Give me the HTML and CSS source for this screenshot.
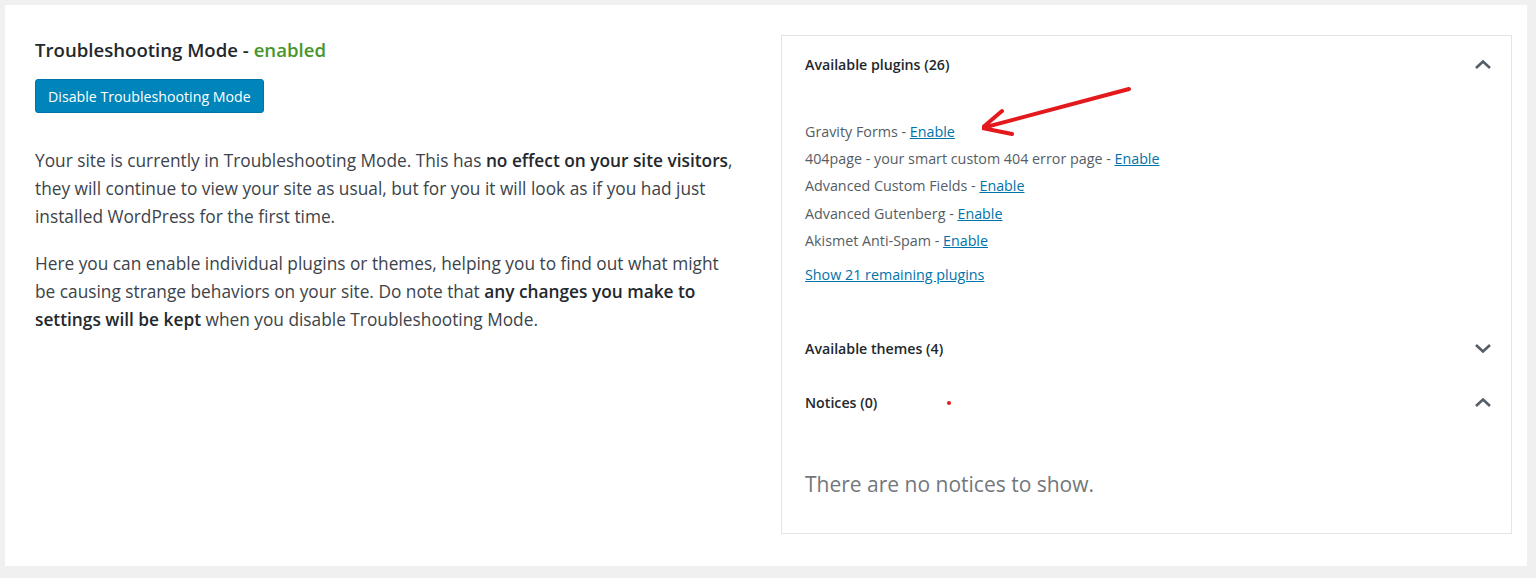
FILE: index.html
```html
<!DOCTYPE html>
<html lang="en">
<head>
    <meta charset="UTF-8">
    <title>Troubleshooting Mode</title>
    <link rel="stylesheet" href="styles.css">
</head>
<body>
    <div id="card">
        <div id="introColumn">
            <h2 class="modeTitle">Troubleshooting Mode - <span class="enabled">enabled</span></h2>
            <button class="primaryButton">Disable Troubleshooting Mode</button>
            <p>Your site is currently in Troubleshooting Mode. This has <strong>no effect on your site visitors</strong>, they will continue to view your site as usual, but for you it will look as if you had just installed WordPress for the first time.</p>
            <p>Here you can enable individual plugins or themes, helping you to find out what might be causing strange behaviors on your site. Do note that <strong>any changes you make to settings will be kept</strong> when you disable Troubleshooting Mode.</p>
        </div>
        <div id="accordion">
            <div class="section">
                <div class="sectionHeader">
                    <span>Available plugins (26)</span>
                    <svg class="chevron" width="18" height="11" viewBox="0 0 18 11"><polyline points="2,9 9,2.5 16,9" /></svg>
                </div>
                <div class="sectionBody pluginList">
                    <ul>
                        <li>Gravity Forms - <a href="#">Enable</a></li>
                        <li>404page - your smart custom 404 error page - <a href="#">Enable</a></li>
                        <li>Advanced Custom Fields - <a href="#">Enable</a></li>
                        <li>Advanced Gutenberg - <a href="#">Enable</a></li>
                        <li>Akismet Anti-Spam - <a href="#">Enable</a></li>
                    </ul>
                    <a href="#" class="showMore">Show 21 remaining plugins</a>
                </div>
            </div>
            <div class="section">
                <div class="sectionHeader">
                    <span>Available themes (4)</span>
                    <svg class="chevron" width="18" height="11" viewBox="0 0 18 11"><polyline points="2,2 9,8.5 16,2" /></svg>
                </div>
            </div>
            <div class="section">
                <div class="sectionHeader">
                    <span>Notices (0)</span>
                    <svg class="chevron" width="18" height="11" viewBox="0 0 18 11"><polyline points="2,9 9,2.5 16,9" /></svg>
                </div>
                <div class="sectionBody noticeBody">There are no notices to show.</div>
            </div>
        </div>
        <svg id="annotationArrow" width="160" height="60" viewBox="0 0 160 60">
            <path d="M147 12 L 0 51 M20 34 L 0 51 L 30 57" />
        </svg>
        <span id="redDot"></span>
    </div>
</body>
</html>
```

FILE: styles.css
```css
body {
    margin: 0;
    background-color: #f0f0f1;
    font-family: 'Open Sans', 'Noto Sans', sans-serif;
    color: #32373c;
}
#card {
    position: relative;
    margin: 5px 9px 12px 5px;
    height: 561px;
    box-sizing: border-box;
    background-color: #ffffff;
    padding: 30px 15px 0 30px;
    display: grid;
    grid-template-columns: 702px 731px;
    column-gap: 44px;
    align-items: start;
}
.modeTitle {
    margin: 2px 0 0 0;
    font-size: 18.6px;
    font-weight: 600;
    line-height: 26px;
    color: #23282d;
}
.modeTitle .enabled {
    color: #46962b;
}
.primaryButton {
    margin-top: 16px;
    height: 34px;
    padding: 0 12px;
    font-family: inherit;
    font-size: 14.2px;
    color: #ffffff;
    background-color: #0085ba;
    border: 1px solid #0073aa;
    border-radius: 3px;
}
#introColumn p {
    margin: 19px 0 0 0;
    font-size: 17.3px;
    line-height: 28px;
    color: #3c434a;
}
#introColumn p:first-of-type {
    margin-top: 34px;
}
#introColumn strong {
    font-weight: 600;
    color: #23282d;
}
#accordion {
    border: 1px solid #e2e4e7;
    height: 499px;
    box-sizing: border-box;
}
.sectionHeader {
    height: 54px;
    padding: 0 19px 0 23px;
    display: flex;
    justify-content: space-between;
    align-items: center;
    font-size: 14.2px;
    font-weight: 600;
    color: #23282d;
}
.section:first-child .sectionHeader {
    height: 56px;
}
.chevron polyline {
    fill: none;
    stroke: #555d66;
    stroke-width: 2.6;
}
.sectionBody {
    padding: 0 23px;
}
.pluginList {
    padding-top: 26px;
    padding-bottom: 33px;
}
.pluginList ul {
    list-style: none;
    margin: 0;
    padding: 0;
}
.pluginList li, .showMore {
    font-size: 14.3px;
    line-height: 27.2px;
    color: #555d66;
}
.pluginList a {
    color: #0073aa;
}
.showMore {
    display: inline-block;
    margin-top: 7px;
}
.noticeBody {
    padding-top: 40px;
    font-size: 21px;
    line-height: 30px;
    color: #72777c;
}
#annotationArrow {
    position: absolute;
    left: 977px;
    top: 72px;
}
#annotationArrow path {
    fill: none;
    stroke: #e3191e;
    stroke-width: 4;
    stroke-linecap: round;
    stroke-linejoin: round;
}
#redDot {
    position: absolute;
    left: 942px;
    top: 396px;
    width: 4px;
    height: 4px;
    border-radius: 50%;
    background-color: #e3191e;
}
```
